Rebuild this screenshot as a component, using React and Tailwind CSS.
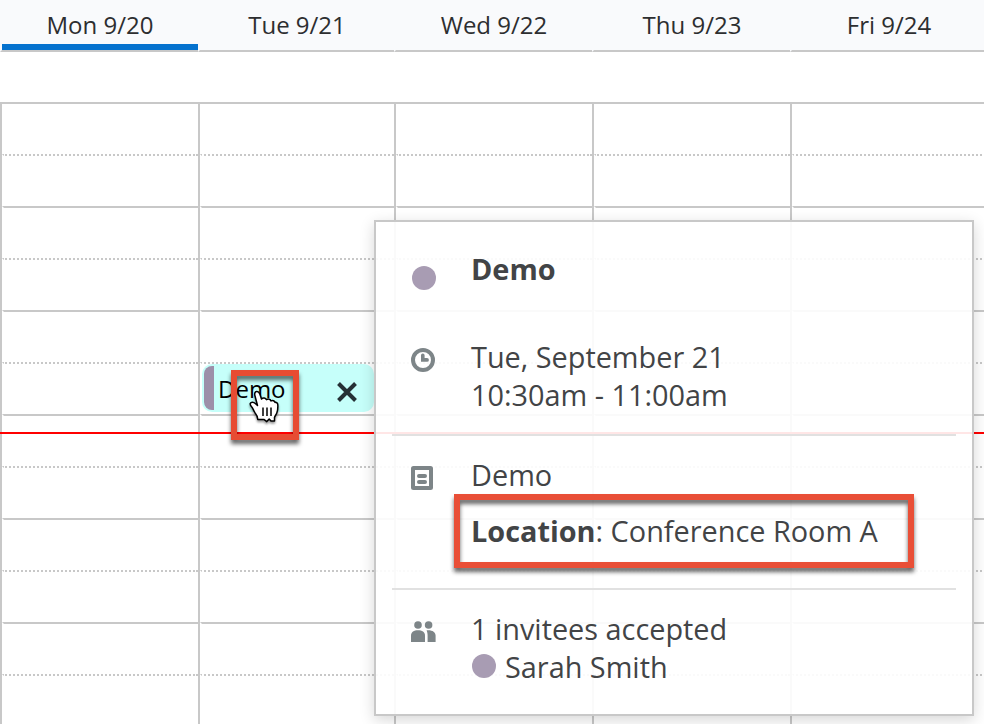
const days = [
  { label: 'Mon 9/20', width: 'w-[198px]', today: true },
  { label: 'Tue 9/21', width: 'w-[196px]' },
  { label: 'Wed 9/22', width: 'w-[198px]' },
  { label: 'Thu 9/23', width: 'w-[198px]' },
  { label: 'Fri 9/24', width: 'w-[196px]' },
];

const slots = Array.from({ length: 12 }, (_, i) => i);

function DayHeader({ day }) {
  return (
    <div className={`${day.width} h-[52px] shrink-0 border-b-2 border-l-2 border-b-[#c8c8c8] border-l-transparent bg-[#f9fafc] bg-clip-padding flex flex-col`}>
      <div className="h-11 pt-2 text-center text-2xl leading-[33px] text-[#2d2e30]">{day.label}</div>
      {day.today && <div className="h-1.5 bg-[#0572ce]" />}
    </div>
  );
}

function DayColumn({ day }) {
  return (
    <div className={`${day.width} shrink-0 border-l-2 border-[#c8c8c8]`}>
      {slots.map((slot) => (
        <div
          key={slot}
          className={`h-[52px] border-t-2 border-t-[#c8c8c8] ${slot ? 'border-l-2 border-l-transparent' : ''} ${slot % 2 ? '[border-top-style:dotted]' : ''}`}
        />
      ))}
    </div>
  );
}

function ClockIcon() {
  return (
    <svg width="24" height="24" viewBox="0 0 24 24" fill="none">
      <circle cx="12" cy="12" r="10" stroke="#7d8588" strokeWidth="4" />
      <path d="M10 7.2a1.8 1.8 0 0 1 3.6 0V10H16a1.9 1.9 0 0 1 0 3.8h-6z" fill="#7d8588" />
    </svg>
  );
}

function NotesIcon() {
  return (
    <svg width="22" height="24" viewBox="0 0 22 24" fill="none">
      <rect x="2" y="2" width="18" height="20" rx="0.5" stroke="#7d8588" strokeWidth="4" strokeLinejoin="round" />
      <path d="M8 10h6M8 16h6" stroke="#7d8588" strokeWidth="4" strokeLinecap="round" />
    </svg>
  );
}

function PeopleIcon() {
  return (
    <svg width="25" height="22" viewBox="0 0 25 22" fill="#7d8588">
      <circle cx="7" cy="4" r="3.8" />
      <circle cx="17.6" cy="4" r="3.8" />
      <path d="M0 21v-6.5C0 11 3 9.2 7 9.2s7 1.8 7 5.3V21z" />
      <path d="M15.6 9.3c5.4-.6 9 1.7 9 5.2V21h-8v-6.5c0-2.2-.4-3.400-1-5.200z" />
    </svg>
  );
}

function HandCursor() {
  return (
    <svg
      className="absolute left-[246px] top-[388px] [filter:drop-shadow(0_2px_1px_rgba(0,0,0,0.4))]"
      width="36"
      height="38"
      viewBox="0 0 36 38"
    >
      <path
        d="M9 8C8.2 5.5 9 3.7 10.6 3.5c1.6-.2 2.600.8 3.200 2.500l1.700 5c1.500-1.700 4.200-1.300 5 .6 1.700-1 4-.5 4.600 1.300 1.600-.7 3.400-.1 4 1.500 1.400-.3 2.600.7 2.700 2.300.2 3.300-.1 6-1 8.300-.8 2-2 3-2.300 4.500v3.500h-3.500l-1.800-2-2.400 2.600-2.600-2h-6.400c0-3-1.400-5.300-3-7.200-1.300-1.700-1.600-3.800-3-5.300-1.200-1.300-2-2.500-1.500-3.700.8-1.800 3.400-1.400 5 .1l2.200 2z"
        fill="#fff"
        stroke="#000"
        strokeWidth="1.5"
        strokeLinejoin="round"
      />
      <path d="M17 19.500v8.500M21 19.500v8.500M25 19.500v8.500" stroke="#000" strokeWidth="1.5" />
    </svg>
  );
}

function Dot() {
  return <span className="block size-6 rounded-full bg-[#a89cb3]" />;
}

function Row({ icon, offset, children }) {
  return (
    <div className="flex pl-[19px]">
      <div className={`w-[60px] shrink-0 ${offset}`}>{icon}</div>
      <div className="text-[28.85px] leading-[38px] text-[#424446]">{children}</div>
    </div>
  );
}

function EventPopup() {
  return (
    <div className="absolute left-[374px] top-[220px] h-[496px] w-[600px] border-2 border-[#c8c8c8] bg-white/90 bg-clip-padding px-4 pt-7 shadow-[0_4px_14px_rgba(0,0,0,0.16)]">
      <Row icon={<Dot />} offset="pt-4 pl-px">
        <div className="font-bold">Demo</div>
      </Row>
      <div className="mt-12 border-b-2 border-[#e1e1e1] pb-5">
        <Row icon={<ClockIcon />} offset="pt-2.5">
          <div>Tue, September 21</div>
          <div>10:30am - 11:00am</div>
        </Row>
      </div>
      <div className="border-b-2 border-[#e1e1e1] pt-5 pb-[38px]">
        <Row icon={<NotesIcon />} offset="pt-2.5">
          <div>Demo</div>
          <div className="mt-[18px]"><b>Location</b>: Conference Room A</div>
        </Row>
      </div>
      <div className="pt-5">
        <Row icon={<PeopleIcon />} offset="pt-[11px]">
          <div>1 invitees accepted</div>
          <div className="flex pl-px">
            <span className="mt-1.5 mr-[9px]"><Dot /></span>
            Sarah Smith
          </div>
        </Row>
      </div>
    </div>
  );
}

function CalendarEvent() {
  return (
    <div className="absolute left-[202px] top-[364px] flex h-12 w-[172px] items-center rounded-[10px] bg-[#c6fffa] p-0.5">
      <div className="h-11 w-2.5 rounded-l-lg bg-[#9c8fa9]" />
      <div className="ml-1 mt-0.5 flex-1 text-2xl text-black">Demo</div>
      <svg className="mt-2 mr-[14px]" width="22" height="22" viewBox="0 0 22 22">
        <path d="M2.5 2.5l17 17M19.5 2.5l-17 17" stroke="#263136" strokeWidth="4" />
      </svg>
    </div>
  );
}

export default function App() {
  return (
    <div className="relative h-[724px] w-[984px] overflow-hidden bg-white font-['Open_Sans',sans-serif]">
      <div className="flex bg-[#f9fafc]">
        {days.map((day) => (
          <DayHeader key={day.label} day={day} />
        ))}
      </div>
      <div className="mt-[50px] flex">
        {days.map((day) => (
          <DayColumn key={day.label} day={day} />
        ))}
      </div>
      <CalendarEvent />
      <div className="absolute top-[432px] left-0 h-0.5 w-full bg-[#ff0000]" />
      <EventPopup />
      {/* highlight frames */}
      <div className="absolute left-[231px] top-[370px] h-[70px] w-[68px] border-6 border-[#e74c33] [filter:drop-shadow(0_4px_2px_rgba(0,0,0,0.6))]" />
      <div className="absolute left-[454px] top-[494px] h-[74px] w-[460px] border-6 border-[#e94f37] [filter:drop-shadow(0_4px_2px_rgba(0,0,0,0.6))]" />
      <HandCursor />
    </div>
  );
}
